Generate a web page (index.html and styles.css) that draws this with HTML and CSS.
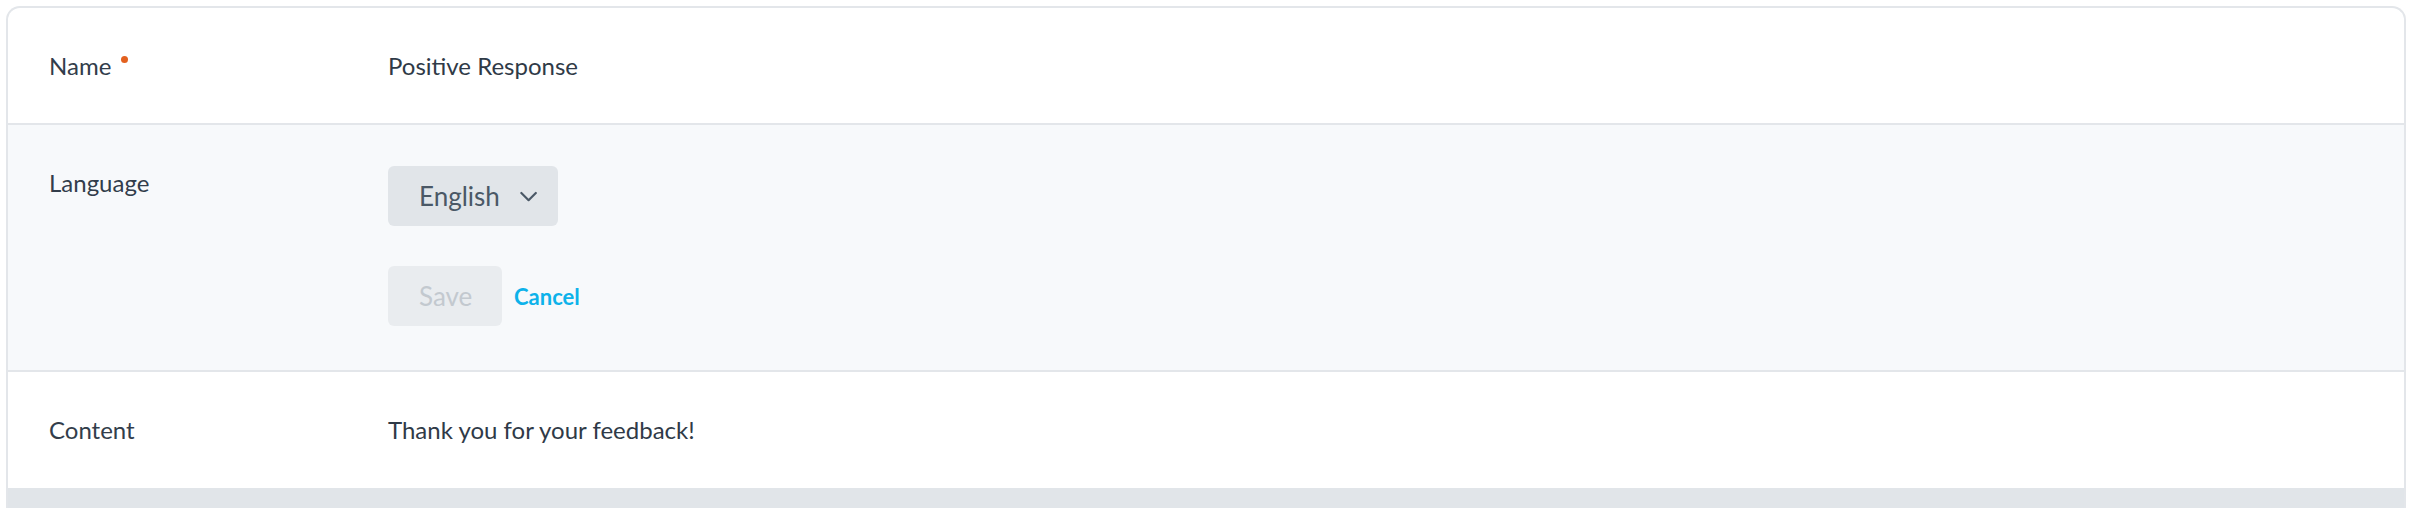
FILE: index.html
```html
<!DOCTYPE html>
<html lang="en">
<head>
<meta charset="utf-8">
<title>Response</title>
<link rel="stylesheet" href="styles.css">
</head>
<body>
  <div class="card">
    <div class="row">
      <div class="label">Name<span class="req"></span></div>
      <div class="value">Positive Response</div>
    </div>
    <div class="row edit">
      <div class="label">Language</div>
      <div class="value">
        <button class="select" type="button">
          <span>English</span>
          <svg class="chev" width="19" height="12" viewBox="0 0 19 12"><polyline points="1.5,1.5 9.5,9.5 17.5,1.5" fill="none" stroke="#4a5866" stroke-width="2.4" stroke-linecap="round" stroke-linejoin="round"/></svg>
        </button>
        <div class="actions">
          <button class="save" type="button" disabled>Save</button>
          <a class="cancel" href="#">Cancel</a>
        </div>
      </div>
    </div>
    <div class="row last">
      <div class="label">Content</div>
      <div class="value">Thank you for your feedback!</div>
    </div>
    <div class="footer"></div>
  </div>
</body>
</html>
```
FILE: styles.css
```css
html, body {
  margin: 0;
  background: #ffffff;
  overflow: hidden;
}
body {
  padding: 6px 6px 0 6px;
  font-family: Lato, "Open Sans", sans-serif;
  color: #2f3a47;
}
.card {
  border: 2px solid #e3e6ea;
  border-bottom: none;
  border-radius: 14px 14px 0 0;
  background: #ffffff;
  overflow: hidden;
}
.row {
  display: grid;
  grid-template-columns: 339px 1fr;
  padding: 41px 41px 41px 41px;
  border-bottom: 2px solid #e3e6ea;
  font-size: 24px;
  line-height: 33px;
}
.row.edit {
  background: #f7f9fb;
  padding-bottom: 44px;
}
.row.last {
  padding-bottom: 42px;
  border-bottom: none;
}
.label {
  display: flex;
  align-items: flex-start;
  color: #323d4b;
}
.req {
  width: 7px;
  height: 7px;
  border-radius: 50%;
  background: #e3611f;
  margin-left: 10px;
  margin-top: 7px;
}
.value {
  display: flex;
  flex-direction: column;
  align-items: flex-start;
}
.select {
  display: flex;
  align-items: center;
  gap: 20px;
  height: 60px;
  width: 170px;
  padding: 0 21px 0 31px;
  border: none;
  border-radius: 6px;
  background: #e1e5e9;
  font-family: Lato, "Open Sans", sans-serif;
  font-size: 26px;
  color: #4a5866;
  box-sizing: border-box;
}
.chev {
  margin-top: 1px;
}
.actions {
  display: flex;
  align-items: center;
  gap: 12px;
  margin-top: 40px;
}
.save {
  height: 60px;
  width: 114px;
  padding: 0 0 0 31px;
  text-align: left;
  border: none;
  border-radius: 6px;
  background: #e9ecef;
  font-family: Lato, "Open Sans", sans-serif;
  font-size: 26px;
  color: #c3c9cf;
  box-sizing: border-box;
}
.cancel {
  font-size: 22px;
  font-weight: 700;
  color: #0db2ea;
  text-decoration: none;
}
.footer {
  height: 60px;
  background: #e1e5e9;
}
```
